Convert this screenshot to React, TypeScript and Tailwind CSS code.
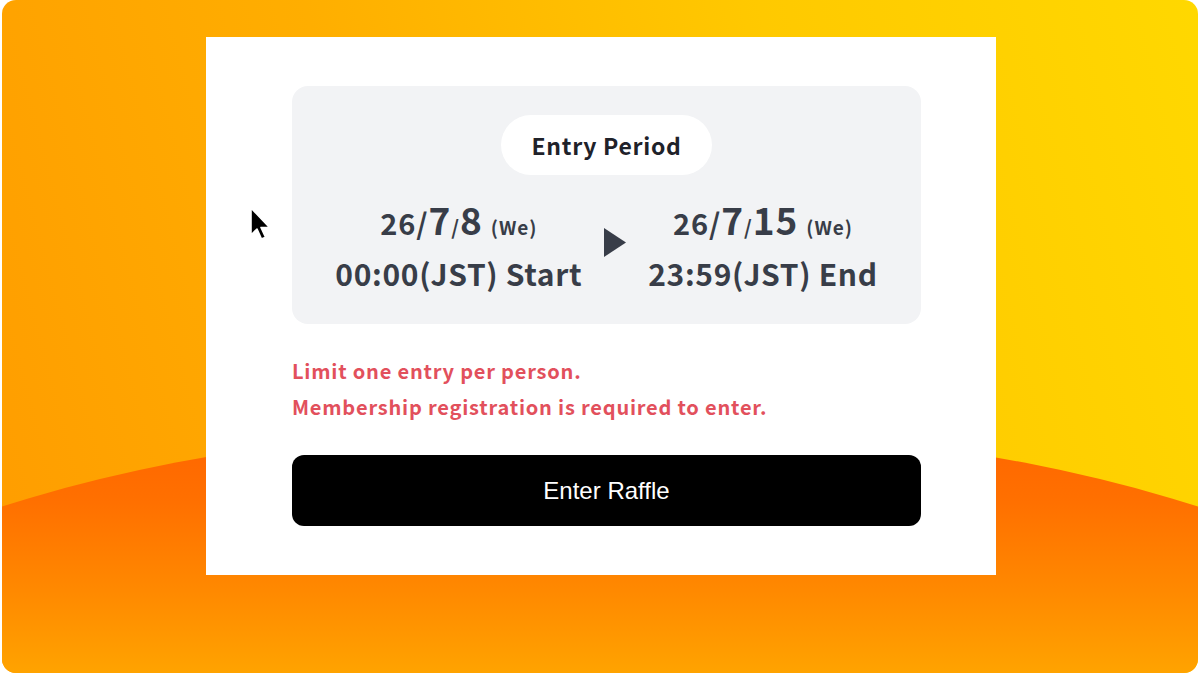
import React from 'react';

const jp = "font-['Noto_Sans_CJK_JP','Noto_Sans',sans-serif]";

const Cursor = () => (
  <svg className="absolute left-[245px] top-[204px]" width="28" height="42" viewBox="0 0 28 42">
    <path
      d="M4 4 L4 31 L10 25 L14.5 35 L18.5 33.2 L14 23.5 L22.5 23.5 Z"
      fill="#000"
      stroke="#fff"
      strokeWidth="1.6"
      strokeLinejoin="round"
    />
  </svg>
);

const DateBlock = ({ day, time }: { day: string; time: string }) => (
  <div className="flex flex-col items-center text-[#383d48]">
    <div className="flex items-baseline leading-none tracking-[0.06em]">
      <span className="text-[29px]">26/</span>
      <span className="text-[37px]">7</span>
      <span className="text-[20px]">/</span>
      <span className="text-[37px]">{day}</span>
      <span className="text-[19px] ml-[8px]">(We)</span>
    </div>
    <div className="mt-[20px] text-[30px] leading-none tracking-[0.022em]">{time}</div>
  </div>
);

const App = () => {
  return (
    <div className="w-[1200px] h-[676px] bg-white px-[2px] pb-[3px]">
      <div className="relative w-full h-full rounded-[14px] overflow-hidden bg-[linear-gradient(75deg,#ff9c00_0%,#ffae00_35%,#ffc900_68%,#ffd800_100%)]">
        {/* lower arc */}
        <div className="absolute left-[-302px] top-[424px] w-[1800px] h-[654px] rounded-[50%] bg-[linear-gradient(180deg,#ff6400_0%,#ff7000_12%,#ff8a00_26%,#ffa300_38%)]" />

        <div className="relative flex justify-center pt-[37px] pl-[2px]">
          <div className={`w-[790px] h-[538px] bg-white pl-[86px] pt-[49px] ${jp} font-bold`}>
            <div className="w-[629px] h-[238px] rounded-[16px] bg-[#f2f3f5] flex flex-col items-center pt-[29px]">
              <div className="w-[211px] h-[60px] rounded-full bg-white flex items-center justify-center text-[23px] text-[#1f222a] tracking-[0.03em]">
                Entry Period
              </div>
              <div className="mt-[26px] flex items-start gap-[22px]">
                <DateBlock day="8" time="00:00(JST) Start" />
                <svg width="22" height="29" viewBox="0 0 22 29" className="mt-[27px]">
                  <path d="M0 0 L22 14.5 L0 29 Z" fill="#383d48" />
                </svg>
                <DateBlock day="15" time="23:59(JST) End" />
              </div>
            </div>

            <div className="mt-[29px] text-[#e2505c] text-[20px] leading-[36px] tracking-[0.04em]">
              <p>Limit one entry per person.</p>
              <p>Membership registration is required to enter.</p>
            </div>

            <button className="mt-[30px] w-[629px] h-[71px] rounded-[12px] bg-black text-white text-[24px] font-normal font-['Liberation_Sans',Arial,sans-serif] flex items-center justify-center">
              Enter Raffle
            </button>
          </div>
        </div>

        <Cursor />
      </div>
    </div>
  );
};

export default App;
